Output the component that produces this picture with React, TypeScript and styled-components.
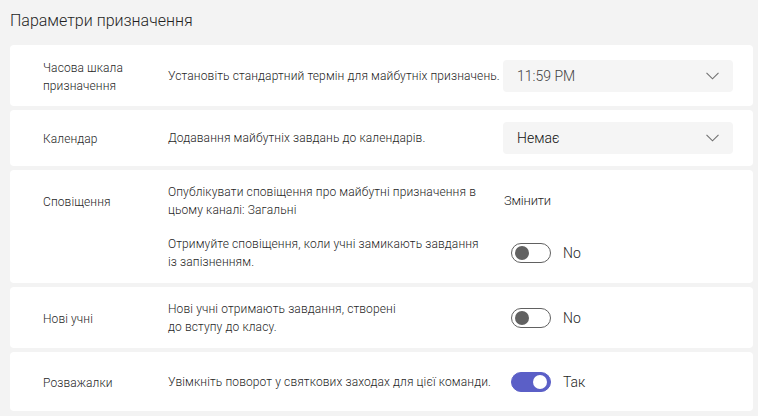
import React from "react";
import styled, { createGlobalStyle } from "styled-components";

const Global = createGlobalStyle`
  html, body {
    margin: 0;
    background: #f3f3f3;
  }
  body {
    font-family: Roboto, "Noto Sans", sans-serif;
    font-weight: 300;
    color: #242424;
  }
`;

const Page = styled.div`
  width: 758px;
  height: 416px;
  box-sizing: border-box;
  padding: 10px 5px 5px 10px;
  display: flex;
  flex-direction: column;
  gap: 4px;
`;

const Title = styled.h1`
  margin: 0 0 9px;
  font-size: 16px;
  line-height: 22px;
  font-weight: 300;
  color: #1f1f1f;
`;

const Card = styled.section<{ $h: number }>`
  min-height: ${(p) => p.$h}px;
  box-sizing: border-box;
  background: #fff;
  border-radius: 4px;
  padding: 0 20px 0 33px;
  display: grid;
  grid-template-columns: 125px 335px 230px;
  align-items: center;
  align-content: center;
  row-gap: 16px;
`;

const Label = styled.div`
  font-size: 12px;
  line-height: 18px;
  letter-spacing: 0.1px;
  color: #1f1f1f;
  padding-top: 2px;
`;

const Desc = styled.div`
  font-size: 12px;
  line-height: 18px;
  letter-spacing: 0.12px;
  color: #1f1f1f;
  white-space: nowrap;
`;

const Select = styled.div`
  height: 32px;
  border-radius: 4px;
  background: #f5f5f5;
  display: flex;
  align-items: center;
  justify-content: space-between;
  padding: 0 14px;
  font-size: 14px;
`;

const SelectValue = styled.span<{ $dark?: boolean }>`
  color: ${(p) => (p.$dark ? "#111" : "#424242")};
`;

const Link = styled.div`
  font-size: 13px;
  letter-spacing: -0.2px;
  color: #1f1f1f;
  padding-left: 1px;
`;

const ToggleRow = styled.div`
  display: flex;
  align-items: center;
  gap: 12px;
  padding-left: 8px;
  font-size: 14px;
  color: #1f1f1f;
`;

const Track = styled.div<{ $on?: boolean }>`
  width: 40px;
  height: 20px;
  box-sizing: border-box;
  border-radius: 10px;
  border: 1px solid ${(p) => (p.$on ? "#5b5fc7" : "#616161")};
  background: ${(p) => (p.$on ? "#5b5fc7" : "#fff")};
  display: flex;
  align-items: center;
  justify-content: ${(p) => (p.$on ? "flex-end" : "flex-start")};
  padding: 0 3px;
`;

const Knob = styled.div<{ $on?: boolean }>`
  width: 14px;
  height: 14px;
  border-radius: 50%;
  background: ${(p) => (p.$on ? "#fff" : "#616161")};
`;

const Chevron = () => (
  <svg width="13" height="8" viewBox="0 0 13 8">
    <polyline points="0.5,0.8 6.5,6.8 12.5,0.8" fill="none" stroke="#707070" strokeWidth="1.1" />
  </svg>
);

const Toggle = ({ on, text }: { on?: boolean; text: string }) => (
  <ToggleRow>
    <Track $on={on}>
      <Knob $on={on} />
    </Track>
    <span>{text}</span>
  </ToggleRow>
);

export default function App() {
  return (
    <>
      <Global />
      <Page>
        <Title>Параметри призначення</Title>
        <Card $h={61}>
          <Label>
            Часова шкала
            <br />
            призначення
          </Label>
          <Desc>Установіть стандартний термін для майбутніх призначень.</Desc>
          <Select>
            <SelectValue>11:59 PM</SelectValue>
            <Chevron />
          </Select>
        </Card>
        <Card $h={56}>
          <Label>Календар</Label>
          <Desc>Додавання майбутніх завдань до календарів.</Desc>
          <Select>
            <SelectValue $dark>Немає</SelectValue>
            <Chevron />
          </Select>
        </Card>
        <Card $h={113}>
          <Label>Сповіщення</Label>
          <Desc>
            Опублікувати сповіщення про майбутні призначення в
            <br />
            цьому каналі: Загальні
          </Desc>
          <Link>Змінити</Link>
          <div />
          <Desc>
            Отримуйте сповіщення, коли учні замикають завдання
            <br />
            із запізненням.
          </Desc>
          <Toggle text="No" />
        </Card>
        <Card $h={61}>
          <Label>Нові учні</Label>
          <Desc>
            Нові учні отримають завдання, створені
            <br />
            до вступу до класу.
          </Desc>
          <Toggle text="No" />
        </Card>
        <Card $h={59}>
          <Label>Розважалки</Label>
          <Desc>Увімкніть поворот у святкових заходах для цієї команди.</Desc>
          <Toggle on text="Так" />
        </Card>
      </Page>
    </>
  );
}
